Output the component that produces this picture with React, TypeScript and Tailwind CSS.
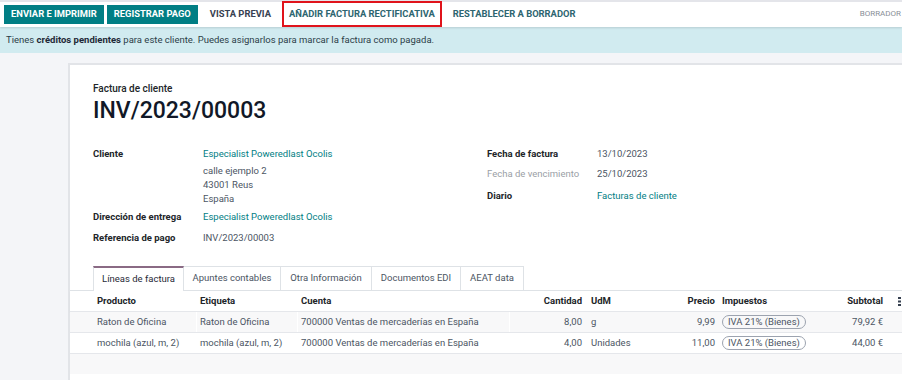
import React from "react";

const teal = "text-[#017e84]";

function Field({ label, children, muted }: { label: string; children: React.ReactNode; muted?: boolean }) {
  return (
    <div className="flex">
      <div className={`w-[110px] shrink-0 ${muted ? "text-[#9aa0a6] font-normal" : "font-bold text-[#212529]"}`}>{label}</div>
      <div className="flex-1">{children}</div>
    </div>
  );
}

const cols = "grid grid-cols-[24px_103px_101px_212px_78px_53px_78px_104px_64px_1fr]";

function Badge({ t }: { t: string }) {
  return (
    <span className="inline-block rounded-full border border-[#9ca3af] px-[5px] leading-[12px] text-[#4b5563]">{t}</span>
  );
}

export default function App() {
  const rows = [
    { p: "Raton de Oficina", e: "Raton de Oficina", c: "700000 Ventas de mercaderías en España", q: "8,00", u: "g", pr: "9,99", s: "79,92 €" },
    { p: "mochila (azul, m, 2)", e: "mochila (azul, m, 2)", c: "700000 Ventas de mercaderías en España", q: "4,00", u: "Unidades", pr: "11,00", s: "44,00 €" },
  ];
  return (
    <div className="w-[902px] h-[380px] overflow-hidden bg-[#f4f5f8] text-[9.5px] text-[#374151]" style={{ fontFamily: "Roboto, 'Liberation Sans', sans-serif" }}>
      {/* top bar */}
      <div className="h-[27px] bg-white border-t-2 border-[#e4e5ea] shadow-[0_1px_2px_rgba(0,0,0,0.12)] flex items-center pl-[4px] relative z-10">
        <div className="flex items-center gap-[3px] mt-[-1px]">
          <div className="h-[19px] px-[7px] bg-[#017e84] text-white font-bold flex items-center text-[9.4px]">ENVIAR E IMPRIMIR</div>
          <div className="h-[19px] px-[7px] bg-[#017e84] text-white font-bold flex items-center text-[9.4px]">REGISTRAR PAGO</div>
        </div>
        <div className="ml-[12px] font-bold text-[#374151] mt-[-1px] text-[9.4px]">VISTA PREVIA</div>
        <div className="ml-[11px] h-[26px] mt-[-1px] border-2 border-[#e0131b] flex items-center px-[5px] font-bold text-[#2d6570] text-[9.4px]">AÑADIR FACTURA RECTIFICATIVA</div>
        <div className="ml-[11px] font-bold text-[#2d6570] mt-[-1px] text-[9.4px]">RESTABLECER A BORRADOR</div>
        <div className="ml-auto mr-[1px] text-[8px] text-[#8a8f98] mt-[-1px]">BORRADOR</div>
      </div>
      {/* alert */}
      <div className="h-[26px] bg-[#d1ebf0] flex items-center pl-[6px] text-[#2c3e48]">
        <span>Tienes <b className="font-bold text-[#1f2937]">créditos pendientes</b> para este cliente. Puedes asignarlos para marcar la factura como pagada.</span>
      </div>
      {/* sheet */}
      <div className="pl-[68px] pt-[10px]">
        <div className="bg-white border-2 border-r-0 border-b-0 border-[#e2e4e8] h-[320px]">
          <div className="pl-[23px] pt-[16px]">
            <div className="text-[10px] font-medium text-[#212529]">Factura de cliente</div>
            <div className="text-[23px] font-medium text-[#111827] leading-[28px] mt-[1px]">INV/2023/00003</div>
            <div className="grid grid-cols-[394px_1fr] mt-[22px] leading-[14px]">
              <div className="flex flex-col">
                <Field label="Cliente">
                  <div className={teal}>Especialist Poweredlast Ocolis</div>
                  <div className="mt-[3px] text-[#4b5563]">calle ejemplo 2</div>
                  <div className="text-[#4b5563]">43001 Reus</div>
                  <div className="text-[#4b5563]">España</div>
                </Field>
                <div className="mt-[4px]">
                  <Field label="Dirección de entrega">
                    <div className={teal}>Especialist Poweredlast Ocolis</div>
                  </Field>
                </div>
                <div className="mt-[7px]">
                  <Field label="Referencia de pago">
                    <div className="text-[#4b5563]">INV/2023/00003</div>
                  </Field>
                </div>
              </div>
              <div className="flex flex-col">
                <Field label="Fecha de factura"><div className="text-[#4b5563]">13/10/2023</div></Field>
                <div className="mt-[6px]"><Field label="Fecha de vencimiento" muted><div className="text-[#4b5563]">25/10/2023</div></Field></div>
                <div className="mt-[8px]"><Field label="Diario"><div className={teal}>Facturas de cliente</div></Field></div>
              </div>
            </div>
            {/* tabs */}
            <div className="flex mt-[21px] h-[25px] text-[#4b5563]">
              <div className="w-[91px] border border-b-0 border-t-2 border-[#dee2e6] border-t-[#8a6a84] flex items-center justify-center text-[#1f2937] bg-white relative z-10">Líneas de factura</div>
              <div className="w-[97px] border-b border-t border-r border-[#dee2e6] flex items-center justify-center">Apuntes contables</div>
              <div className="w-[91px] border-b border-t border-r border-[#dee2e6] flex items-center justify-center">Otra Información</div>
              <div className="w-[89px] border-b border-t border-r border-[#dee2e6] flex items-center justify-center">Documentos EDI</div>
              <div className="w-[63px] border-b border-t border-r border-[#dee2e6] flex items-center justify-center">AEAT data</div>
              <div className="flex-1 border-b border-[#dee2e6]" />
            </div>
          </div>
          {/* table */}
          <div className="border-t border-[#dee2e6] -mt-[1px]">
            <div className={`${cols} h-[21px] items-center font-bold text-[#212529] border-b border-[#e5e7eb] shadow-[0_1px_1px_rgba(0,0,0,0.06)]`}>
              <div />
              <div className="pl-[3px]">Producto</div>
              <div className="pl-[3px]">Etiqueta</div>
              <div className="pl-[3px]">Cuenta</div>
              <div className="text-right pr-[6px]">Cantidad</div>
              <div className="pl-[3px]">UdM</div>
              <div className="text-right pr-[4px]">Precio</div>
              <div className="pl-[3px]">Impuestos</div>
              <div className="text-right pr-[4px]">Subtotal</div>
              <div className="pl-[11px] flex items-center">
                <svg width="4" height="9" viewBox="0 0 4 9"><rect x="0" y="0" width="3" height="2" fill="#374151" /><rect x="0" y="3.5" width="3" height="2" fill="#374151" /><rect x="0" y="7" width="3" height="2" fill="#374151" /></svg>
              </div>
            </div>
            {rows.map((r, i) => (
              <div key={i} className={`${cols} h-[21px] items-center text-[#4b5563] border-b border-[#e5e7eb] ${i === 0 ? "bg-[#f8f8f9]" : "bg-white"}`}>
                <div />
                <div className="pl-[3px] border-r border-white h-full flex items-center">{r.p}</div>
                <div className="pl-[3px] border-r border-white h-full flex items-center">{r.e}</div>
                <div className="pl-[3px] border-r border-white h-full flex items-center">{r.c}</div>
                <div className="text-right pr-[6px]">{r.q}</div>
                <div className="pl-[3px]">{r.u}</div>
                <div className="text-right pr-[4px]">{r.pr}</div>
                <div className="pl-[3px]"><Badge t="IVA 21% (Bienes)" /></div>
                <div className="text-right pr-[4px]">{r.s}</div>
                <div />
              </div>
            ))}
            <div className="h-[20px] bg-[#f8f8f9]" />
          </div>
        </div>
      </div>
    </div>
  );
}
